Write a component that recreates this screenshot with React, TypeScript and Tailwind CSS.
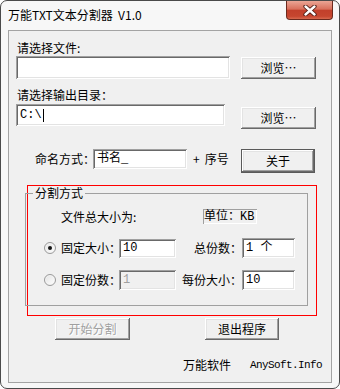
import type { ReactNode } from "react";

const sunken =
  "shadow-[inset_1px_1px_0_#a0a0a0,inset_-1px_-1px_0_#ffffff,inset_2px_2px_0_#696969,inset_-2px_-2px_0_#e3e3e3]";
const raised =
  "shadow-[inset_-1px_-1px_0_#696969,inset_1px_1px_0_#ffffff,inset_-2px_-2px_0_#a0a0a0,inset_2px_2px_0_#e3e3e3]";

function Field({ className, children, disabled }: { className: string; children?: ReactNode; disabled?: boolean }) {
  return (
    <div
      className={`flex shrink-0 items-center whitespace-pre pl-[4px] font-['Liberation_Mono','Noto_Sans_CJK_SC',monospace] ${sunken} ${
        disabled ? "bg-[#f0f0f0] text-[#a0a0a0]" : "bg-white text-black"
      } ${className}`}
    >
      {children}
    </div>
  );
}

function Btn({
  className,
  children,
  disabled,
  isDefault,
}: {
  className: string;
  children: ReactNode;
  disabled?: boolean;
  isDefault?: boolean;
}) {
  return (
    <div
      className={`flex shrink-0 items-center justify-center whitespace-nowrap bg-[#f0f0f0] ${raised} ${
        disabled ? "text-[#a0a0a0] [text-shadow:1px_1px_0_#ffffff]" : "text-black"
      } ${isDefault ? "border border-[#5a5a5a]" : ""} ${className}`}
    >
      {children}
    </div>
  );
}

function Radio({ checked }: { checked?: boolean }) {
  return (
    <div className="flex h-[12px] w-[12px] shrink-0 items-center justify-center rounded-full border border-[#9a9a9a] bg-[linear-gradient(135deg,#e2e2e2,#ffffff)] shadow-[inset_0_0_0_1px_#f4f4f4]">
      {checked && <div className="h-[4px] w-[4px] rounded-full bg-[#141414]" />}
    </div>
  );
}

export default function App() {
  return (
    <div className="h-[389px] w-[340px] bg-white">
      <div className="flex h-[389px] w-[340px] flex-col rounded-[7px] border border-[#4a4a4a] bg-[#f7f7f7] px-[7px] pb-[5px] font-['Noto_Sans_CJK_SC',sans-serif] text-[12px] leading-[14px] text-black">
        {/* title bar */}
        <div className="flex h-[29px] shrink-0 items-start justify-between">
          <div className="mt-[7px] whitespace-pre">万能TXT文本分割器  V1.0</div>
          <div className="-mr-[1px] flex h-[19px] w-[47px] items-center justify-center rounded-b-[4px] border border-t-0 border-[#6b2a1e] bg-[linear-gradient(#eba595,#d9705c_45%,#c2402b_52%,#c6462f_85%,#d8694e)]">
            <svg width="14" height="11" viewBox="0 0 14 11">
              <path d="M2.5 1.5 L11.5 9.5 M11.5 1.5 L2.5 9.5" stroke="#4a1810" strokeWidth="4.2" strokeLinecap="round" />
              <path d="M2.5 1.5 L11.5 9.5 M11.5 1.5 L2.5 9.5" stroke="#ffffff" strokeWidth="2.4" strokeLinecap="round" />
            </svg>
          </div>
        </div>

        {/* client area */}
        <div className="flex flex-1 flex-col whitespace-nowrap border border-[#a3a3a3] bg-[#f0f0f0]">
          <div className="ml-[8px] mt-[10px] h-[14px]">请选择文件:</div>
          <div className="mt-[1px] flex items-start">
            <Field className="ml-[7px] h-[23px] w-[214px]" />
            <Btn className="ml-[11px] mt-[1px] h-[22px] w-[75px]">浏览…</Btn>
          </div>

          <div className="ml-[8px] mt-[9px] h-[14px]">请选择输出目录：</div>
          <div className="mt-[2px] flex h-[25px] items-start">
            <Field className="ml-[7px] h-[22px] w-[209px]">
              C:\<span className="ml-[1px] inline-block h-[13px] w-[1px] bg-black" />
            </Field>
            <Btn className="ml-[16px] mt-[3px] h-[22px] w-[75px]">浏览…</Btn>
          </div>

          <div className="mt-[20px] flex items-start">
            <div className="ml-[26px] flex h-[20px] w-[58px] shrink-0 items-center">命名方式：</div>
            <Field className="h-[20px] w-[94px]">书名_</Field>
            <div className="ml-[6px] flex h-[20px] w-[48px] shrink-0 items-center">
              <span className="mr-[5px]">+</span>序号
            </div>
            <Btn isDefault className="h-[24px] w-[74px]">
              关于
            </Btn>
          </div>

          {/* split options */}
          <div className="ml-[18px] mt-[12px] h-[131px] w-[290px] border border-[#ff0000]">
            <fieldset className="-ml-[3px] h-[120px] w-[283px] border border-[#a0a0a0]">
              <legend className="ml-[7px] px-[2px] leading-[14px]">分割方式</legend>
              <div className="mt-[9px] flex h-[15px] items-center">
                <div className="ml-[35px] w-[142px] shrink-0">文件总大小为:</div>
                <div className="flex h-[15px] w-[54px] shrink-0 items-center pl-[1px] font-['Liberation_Mono','Noto_Sans_CJK_SC',monospace] shadow-[inset_1px_1px_0_#a0a0a0,inset_-1px_-1px_0_#ffffff]">
                  单位：KB
                </div>
              </div>

              <div className="mt-[14px] flex h-[20px] items-center">
                <div className="ml-[18px]">
                  <Radio checked />
                </div>
                <div className="ml-[5px] w-[58px] shrink-0">固定大小：</div>
                <Field className="h-[19px] w-[57px]">10</Field>
                <div className="w-[66px] shrink-0 text-right">总份数：</div>
                <Field className="h-[20px] w-[53px]">1 个</Field>
              </div>

              <div className="mt-[12px] flex h-[20px] items-center">
                <div className="ml-[18px]">
                  <Radio />
                </div>
                <div className="ml-[5px] w-[58px] shrink-0">固定份数：</div>
                <Field disabled className="h-[20px] w-[57px]">
                  1
                </Field>
                <div className="w-[66px] shrink-0 text-right">每份大小：</div>
                <Field className="h-[20px] w-[53px]">10</Field>
              </div>
            </fieldset>
          </div>

          <div className="mt-[2px] flex">
            <Btn disabled className="ml-[46px] h-[22px] w-[75px]">
              开始分割
            </Btn>
            <Btn className="ml-[75px] h-[22px] w-[74px]">退出程序</Btn>
          </div>

          <div className="mt-[18px] flex h-[14px] items-center">
            <div className="ml-[174px] w-[48px] shrink-0">万能软件</div>
            <div className="ml-[19px] font-['Liberation_Mono',monospace] text-[11px] tracking-[-0.6px]">AnySoft.Info</div>
          </div>
        </div>
      </div>
    </div>
  );
}
